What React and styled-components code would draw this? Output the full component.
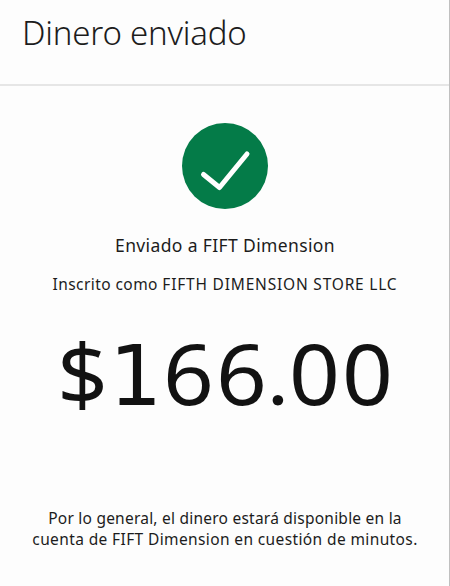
import React from "react";
import styled, { createGlobalStyle } from "styled-components";

const Global = createGlobalStyle`
  * { box-sizing: border-box; }
  body { margin: 0; background: #fdfdfd; color: #1c1c1c; font-family: "Noto Sans", sans-serif; }
`;
const Screen = styled.main`
  width: 450px; height: 586px; display: flex; flex-direction: column; overflow: hidden;
  border-right: 1px solid #c0c0c0;
`;
const Header = styled.header`
  height: 86px; border-bottom: 2px solid #e6e6e6; padding: 11px 0 0 22px;
`;
const Title = styled.h1`
  margin: 0; font-size: 33px; line-height: 44px; font-weight: 300; letter-spacing: -0.2px;
`;
const Body = styled.section`
  width: 450px; display: flex; flex-direction: column; align-items: center; padding-top: 37px; text-align: center;
`;
const Badge = styled.svg`
  width: 86px; height: 86px; display: block;
`;
const Recipient = styled.p`
  margin: 24px 0 0; font-size: 17.5px; line-height: 24px; letter-spacing: 0.37px; white-space: nowrap;
`;
const Registered = styled.p`
  margin: 17px 0 0; font-size: 15.5px; line-height: 20px; white-space: nowrap;
`;
const Tracked = styled.span`
  letter-spacing: ${(p) => p.$spacing};
`;
const Amount = styled.p`
  display: flex; align-items: baseline;
  margin: 29px 0 0; height: 100px; font-size: 84px; line-height: 100px; color: #121212; white-space: nowrap;
`;
const Glyph = styled.span`
  display: flex; justify-content: center; width: 53px; transform: scaleX(1.06);
`;
const FootedGlyph = styled(Glyph)`
  font-family: "DejaVu Sans", sans-serif; font-size: 83px; transform: none;
`;
const Point = styled(Glyph)`
  width: 19.5px; font-family: Lato, sans-serif; transform: none;
`;
const Note = styled.p`
  margin: 85px 0 0; font-size: 15.5px; line-height: 21px; white-space: nowrap;
`;
const NoteLine = styled.span`
  display: block; letter-spacing: ${(p) => p.$spacing};
`;

export default function App() {
  return (
    <Screen>
      <Global />
      <Header><Title>Dinero enviado</Title></Header>
      <Body>
        <Badge viewBox="0 0 86 86" role="img" aria-label="Completado">
          <circle cx="43" cy="43" r="43" fill="#047b48" />
          <path d="M21.5 51.5 L37.5 64.5 L65 31" fill="none" stroke="#fff" strokeWidth="5" strokeLinecap="round" strokeLinejoin="round" />
        </Badge>
        <Recipient>Enviado a FIFT Dimension</Recipient>
        <Registered>
          <Tracked $spacing="0.43px">Inscrito como </Tracked>
          <Tracked $spacing="0.8px">FIFTH DIMENSION STORE LLC</Tracked>
        </Registered>
        <Amount>
          <Glyph>$</Glyph>
          <FootedGlyph>1</FootedGlyph>
          <Glyph>6</Glyph>
          <Glyph>6</Glyph>
          <Point>.</Point>
          <Glyph>0</Glyph>
          <Glyph>0</Glyph>
        </Amount>
        <Note>
          <NoteLine $spacing="0.23px">Por lo general, el dinero estará disponible en la</NoteLine>
          <NoteLine $spacing="0.38px">cuenta de FIFT Dimension en cuestión de minutos.</NoteLine>
        </Note>
      </Body>
    </Screen>
  );
}
